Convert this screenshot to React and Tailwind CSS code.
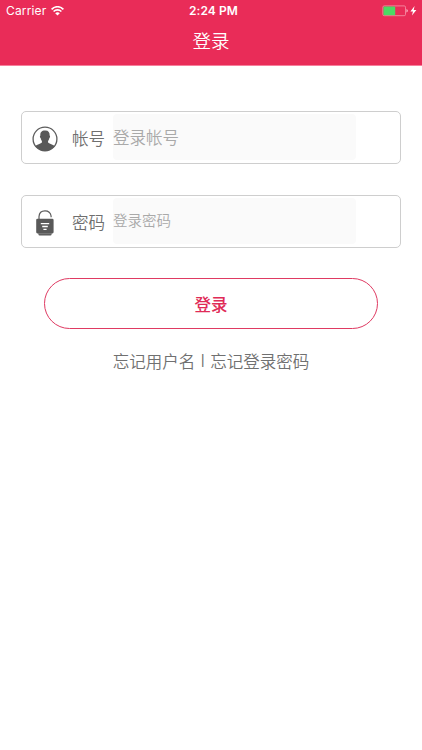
import React from 'react';

function WifiIcon() {
  return (
    <svg className="ml-[5px] h-[10px] w-[13px]" viewBox="0 0 13 10" fill="none" stroke="white">
      <path d="M0.6 3.3C4 -0.1 9 -0.1 12.4 3.3" strokeWidth="1.7" />
      <path d="M2.6 5.5C4.8 3.3 8.2 3.3 10.4 5.5" strokeWidth="1.6" />
      <path d="M4.2 7.2C5.6 5.9 7.4 5.9 8.8 7.2L6.5 9.5Z" fill="white" stroke="none" />
    </svg>
  );
}

function BatteryIcon() {
  return (
    <svg className="h-[12px] w-[36px]" viewBox="0 0 36 12" fill="none">
      <rect x="0.9" y="0.9" width="22.6" height="9.8" rx="1.3" stroke="#f58ba3" strokeWidth="0.9" />
      <rect x="1.5" y="1.5" width="11.7" height="8.7" rx="0.6" fill="#4cd964" />
      <path d="M24.5 4.1C26.2 4.5 26.2 7.1 24.5 7.5Z" fill="#fbc8d3" />
      <path d="M32.6 1.1L28.4 6.4H31L29.9 10.5L34.4 5H31.7Z" fill="white" />
    </svg>
  );
}

function UserIcon() {
  return (
    <svg className="h-[26px] w-[26px]" viewBox="0 0 26 26" fill="none">
      <circle cx="13" cy="13" r="11.9" stroke="#5c5c5c" strokeWidth="1.3" />
      <path
        d="M13 4.4C16.3 4.2 17.9 6.2 17.6 9.5C18.4 9.6 18.2 11.8 17.3 12.2C17 14 16 14.8 15.9 15.9C16 17.5 21.2 18 22.7 20.3C20.3 23.4 16.8 25 13 25C9.2 25 5.7 23.4 3.3 20.3C4.8 18 10 17.5 10.1 15.9C10 14.8 9 14 8.7 12.2C7.8 11.8 7.6 9.6 8.4 9.5C8 6.4 9.7 4.4 13 4.4Z"
        fill="#595959"
      />
    </svg>
  );
}

function LockIcon() {
  return (
    <svg className="h-[26px] w-[26px]" viewBox="0 0 26 26" fill="none">
      <path d="M7 9.3V6.6C7.2 3 9.7 0.9 13 0.9C16.2 0.9 18.6 3 19.1 6V7.2" stroke="#5c5c5c" strokeWidth="1.2" />
      <rect x="4.2" y="8.8" width="17.4" height="14.6" rx="1.3" fill="#595959" />
      <path d="M6.5 23.1H19.5V24.3Q19.5 25.5 18.4 25.5H7.6Q6.5 25.5 6.5 24.3Z" fill="#595959" />
      <path d="M8.8 13.7H17.2M10.2 16.5H15.8M11.4 19.3H14.6" stroke="white" strokeWidth="1.3" />
      <path d="M7 23.7H19" stroke="#a5a5a5" strokeWidth="0.5" />
    </svg>
  );
}

function Field({ icon, label, placeholder, type, inputClass }) {
  return (
    <label className="flex h-[53px] rounded-[5px] border border-[#cecece] bg-white">
      <span className="ml-[10px] mt-[14px] w-[26px] shrink-0">{icon}</span>
      <span className="ml-[14px] mt-[14px] w-[41px] shrink-0 whitespace-nowrap text-[16.5px] leading-[24px] text-[#6f6f6f]">
        {label}
      </span>
      <input
        type={type}
        placeholder={placeholder}
        className={`mt-[2px] h-[46px] w-[243px] rounded-[4px] bg-[#fafafa] px-0 pt-0 outline-none placeholder:text-[#a9a9a9] ${inputClass}`}
      />
    </label>
  );
}

export default function App() {
  return (
    <div className="h-[750px] w-[422px] overflow-hidden bg-white font-['Noto_Sans_CJK_SC',sans-serif] font-[350]">
      <header className="h-[66px] border-b border-[#f77f9c] bg-[#e92c58] text-white">
        <div className="grid h-[22px] grid-cols-3 items-center font-[Inter,sans-serif] text-[12px]">
          <div className="flex items-center pl-[6px] font-normal">
            <span className="tracking-[0.15px]">Carrier</span>
            <WifiIcon />
          </div>
          <span className="pl-[5px] text-center font-semibold tracking-[0.1px]">2:24 PM</span>
          <div className="flex justify-end pr-[4px]">
            <BatteryIcon />
          </div>
        </div>
        <h1 className="pt-[5px] text-center text-[18.5px] font-[350] leading-[27px]">登录</h1>
      </header>

      <main>
        <form className="px-[21px] pt-[45px]">
          <div className="flex flex-col gap-[31px]">
            <Field icon={<UserIcon />} label="帐号" placeholder="登录帐号" type="text" inputClass="pb-0 text-[16.5px] font-[350]" />
            <Field icon={<LockIcon />} label="密码" placeholder="登录密码" type="password" inputClass="pb-[3px] text-[14.5px] font-[350]" />
          </div>
          <button
            type="button"
            className="ml-[23px] mt-[30px] flex h-[51px] w-[334px] items-center justify-center rounded-full border border-[#df3a62] pt-px text-[16.5px] font-medium text-[#e02b57]"
          >
            登录
          </button>
        </form>
        <div className="mt-[20px] flex justify-center whitespace-pre text-[16.5px] leading-[24px] text-[#707070]">
          <a>忘记用户名</a>
          <span className="w-[15px] text-center font-[Inter,sans-serif] text-[17px] font-light">I</span>
          <a>忘记登录密码</a>
        </div>
      </main>
    </div>
  );
}
